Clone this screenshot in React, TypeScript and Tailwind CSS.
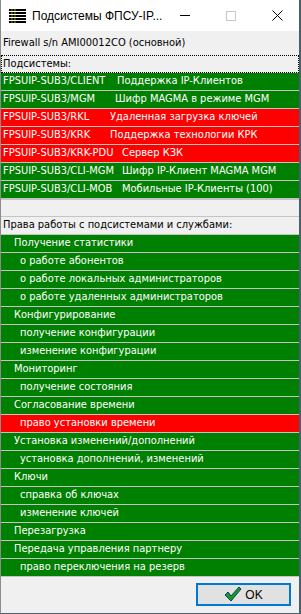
const subsystems = [
  { code: 'FPSUIP-SUB3/CLIENT', name: 'Поддержка IP-Клиентов', ok: true, w: 'w-[116px]' },
  { code: 'FPSUIP-SUB3/MGM', name: 'Шифр MAGMA в режиме MGM', ok: true, w: 'w-[114px]' },
  { code: 'FPSUIP-SUB3/RKL', name: 'Удаленная загрузка ключей', ok: false, w: 'w-[109px]' },
  { code: 'FPSUIP-SUB3/KRK', name: 'Поддержка технологии КРК', ok: false, w: 'w-[109px]' },
  { code: 'FPSUIP-SUB3/KRK-PDU', name: 'Сервер КЗК', ok: false, w: 'w-[121px]' },
  { code: 'FPSUIP-SUB3/CLI-MGM', name: 'Шифр IP-Клиент MAGMA MGM', ok: true, w: 'w-[121px]' },
  { code: 'FPSUIP-SUB3/CLI-MOB', name: 'Мобильные IP-Клиенты (100)', ok: true, w: 'w-[121px]' },
];

const rights = [
  { text: 'Получение статистики', sub: false, ok: true },
  { text: 'о работе абонентов', sub: true, ok: true },
  { text: 'о работе локальных администраторов', sub: true, ok: true },
  { text: 'о работе удаленных администраторов', sub: true, ok: true },
  { text: 'Конфигурирование', sub: false, ok: true },
  { text: 'получение конфигурации', sub: true, ok: true },
  { text: 'изменение конфигурации', sub: true, ok: true },
  { text: 'Мониторинг', sub: false, ok: true },
  { text: 'получение состояния', sub: true, ok: true },
  { text: 'Согласование времени', sub: false, ok: true },
  { text: 'право установки времени', sub: true, ok: false },
  { text: 'Установка изменений/дополнений', sub: false, ok: true },
  { text: 'установка дополнений, изменений', sub: true, ok: true },
  { text: 'Ключи', sub: false, ok: true },
  { text: 'справка об ключах', sub: true, ok: true },
  { text: 'изменение ключей', sub: true, ok: true },
  { text: 'Перезагрузка', sub: false, ok: true },
  { text: 'Передача управления партнеру', sub: false, ok: true },
  { text: 'право переключения на резерв', sub: true, ok: true },
];

const RackIcon = () => (
  <svg width="17" height="16" viewBox="0 0 17 16">
    {[0, 3, 6, 9, 12].map((y, i) => (
      <g key={y}>
        <rect x="0" y={y + 1} width="17" height="2" fill="#000" />
        <rect x="2" y={y + 1.5} width="2" height="1" fill={i % 2 ? '#20c020' : '#ff3030'} />
        <rect x="5" y={y + 1.5} width="2" height="1" fill={i === 2 ? '#ff3030' : '#20c020'} />
      </g>
    ))}
  </svg>
);

const Check = () => (
  <svg width="18" height="17" viewBox="0 0 18 17">
    <path d="M1 9 L4 6 L7 10 L15 1 L17 3 L7 15 Z" fill="#1a9c1a" stroke="#0a3a7a" strokeWidth="1" strokeLinejoin="round" />
  </svg>
);

const Row = ({ bg, children }: { bg: string; children: React.ReactNode }) => (
  <div className={`h-[18px] border-b border-[#c4c4c4] flex items-center whitespace-nowrap ${bg}`}>
    {children}
  </div>
);

const App = () => {
  return (
    <div className="w-[301px] h-[614px] bg-[#f0f0f0] flex flex-col border-l border-[#8c8c8c] border-r-2 border-r-[#46606c] border-b border-b-[#46606c] overflow-hidden text-[11px] text-black font-['DejaVu_Sans_Condensed','DejaVu_Sans',sans-serif] font-stretch-condensed">
      <div className="h-[31px] bg-white flex items-center shrink-0 whitespace-nowrap">
        <div className="ml-[8px] mt-[1px] shrink-0">
          <RackIcon />
        </div>
        <span className="ml-[6px] text-[12px] text-black font-['Liberation_Sans',Arial,sans-serif] font-stretch-normal">
          Подсистемы ФПСУ-IP...
        </span>
        <div className="ml-auto flex items-center shrink-0">
          <div className="w-[46px] flex justify-center">
            <div className="w-[10px] h-px bg-black" />
          </div>
          <div className="w-[46px] flex justify-center">
            <div className="w-[10px] h-[10px] border border-[#c8c8c8]" />
          </div>
          <div className="w-[46px] flex justify-center">
            <svg width="11" height="11" viewBox="0 0 11 11">
              <path d="M0.5 0.5 L10.5 10.5 M10.5 0.5 L0.5 10.5" stroke="#000" strokeWidth="1" />
            </svg>
          </div>
        </div>
      </div>

      <div className="h-[24px] flex items-center pl-[2px] shrink-0">Firewall s/n AMI00012CO (основной)</div>

      <div className="flex flex-col">
        <div className="h-[18px] border border-dotted border-black flex items-center pl-[1px]">Подсистемы:</div>
        {subsystems.map((s) => (
          <Row key={s.code} bg={s.ok ? 'bg-[#008000] text-white' : 'bg-[#ff0000] text-white'}>
            <span className={`pl-[2px] shrink-0 ${s.w}`}>{s.code}</span>
            <span>{s.name}</span>
          </Row>
        ))}
        <div className="h-[18px] border-t border-b border-[#c4c4c4] bg-[#f0f0f0]" />
        <Row bg="bg-[#f0f0f0]">
          <span className="pl-[2px]">Права работы с подсистемами и службами:</span>
        </Row>
        {rights.map((r) => (
          <Row key={r.text} bg={r.ok ? 'bg-[#008000] text-white' : 'bg-[#ff0000] text-white'}>
            <span className={r.sub ? 'pl-[19px]' : 'pl-[13px]'}>{r.text}</span>
          </Row>
        ))}
      </div>

      <div className="flex-1 flex items-start justify-end pr-[8px] pt-[6px]">
        <button className="w-[95px] h-[23px] border-2 border-[#0078d7] bg-[#e1e1e1] flex items-center justify-center gap-[3px] text-[12px] font-['Liberation_Sans',Arial,sans-serif] font-stretch-normal">
          <Check />
          <span>OK</span>
        </button>
      </div>
    </div>
  );
};

export default App;
